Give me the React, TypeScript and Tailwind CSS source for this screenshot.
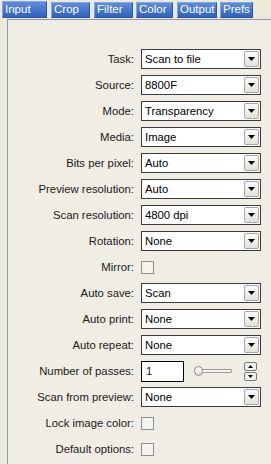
import React from 'react';

type Row =
  | { kind: 'select'; label: string; value: string }
  | { kind: 'check'; label: string }
  | { kind: 'passes'; label: string; value: string };

// tab name, size, left gap
const tabs: [string, string, string][] = [
  ['Input', 'w-[45px] h-[17px]', 'ml-[2px]'],
  ['Crop', 'w-[39px] h-[16px]', 'ml-[4px]'],
  ['Filter', 'w-[39px] h-[16px]', 'ml-[4px]'],
  ['Color', 'w-[37px] h-[16px]', 'ml-[3px]'],
  ['Output', 'w-[40px] h-[16px]', 'ml-[4px]'],
  ['Prefs', 'w-[33px] h-[16px]', 'ml-[3px]'],
];

const rows: Row[] = [
  { kind: 'select', label: 'Task:', value: 'Scan to file' },
  { kind: 'select', label: 'Source:', value: '8800F' },
  { kind: 'select', label: 'Mode:', value: 'Transparency' },
  { kind: 'select', label: 'Media:', value: 'Image' },
  { kind: 'select', label: 'Bits per pixel:', value: 'Auto' },
  { kind: 'select', label: 'Preview resolution:', value: 'Auto' },
  { kind: 'select', label: 'Scan resolution:', value: '4800 dpi' },
  { kind: 'select', label: 'Rotation:', value: 'None' },
  { kind: 'check', label: 'Mirror:' },
  { kind: 'select', label: 'Auto save:', value: 'Scan' },
  { kind: 'select', label: 'Auto print:', value: 'None' },
  { kind: 'select', label: 'Auto repeat:', value: 'None' },
  { kind: 'passes', label: 'Number of passes:', value: '1' },
  { kind: 'select', label: 'Scan from preview:', value: 'None' },
  { kind: 'check', label: 'Lock image color:' },
  { kind: 'check', label: 'Default options:' },
];

const Arrow = () => (
  <div className="w-[15px] h-[16px] mr-[1px] rounded-[2px] border border-[#a7a6aa] bg-gradient-to-b from-[#fbfbf9] to-[#e3e1d8] flex items-center justify-center">
    <svg width="7" height="4" viewBox="0 0 7 4">
      <path d="M0 0 H7 L3.5 4 Z" fill="#000" />
    </svg>
  </div>
);

const Select = ({ value }: { value: string }) => (
  <div className="w-[120px] h-[20px] border border-[#3c3c3c] bg-white flex items-center justify-between">
    <span className="pl-[3px] text-black">{value}</span>
    <Arrow />
  </div>
);

const Check = () => <div className="w-[13px] h-[13px] border border-[#8e8f8f] bg-[#f4f3ee]" />;

const Passes = ({ value }: { value: string }) => (
  <div className="flex items-center">
    <div className="w-[43px] h-[21px] border border-black bg-white flex items-center pl-[4px]">{value}</div>
    <div className="relative w-[42px] h-[21px] ml-[9px]">
      <div className="absolute left-[4px] right-[3px] top-[8px] h-[4px] border border-[#9d9d9d] bg-[#f4f3ee] rounded-[1px]" />
      <div className="absolute left-[1px] top-[5px] w-[9px] h-[10px] rounded-full border border-[#8a8a8a] bg-gradient-to-b from-white to-[#dcdad0]" />
    </div>
    <div className="ml-[9px] flex flex-col gap-[1px]">
      <div className="w-[13px] h-[9px] rounded-[2px] border border-[#7a7a7a] bg-[#f1f0ea] flex items-center justify-center">
        <svg width="5" height="3" viewBox="0 0 5 3"><path d="M0 3 H5 L2.5 0 Z" fill="#000" /></svg>
      </div>
      <div className="w-[13px] h-[9px] rounded-[2px] border border-[#7a7a7a] bg-[#f1f0ea] flex items-center justify-center">
        <svg width="5" height="3" viewBox="0 0 5 3"><path d="M0 0 H5 L2.5 3 Z" fill="#000" /></svg>
      </div>
    </div>
  </div>
);

export default function App() {
  return (
    <div className="w-[271px] h-[464px] bg-[#ece9d8] text-[11.3px] text-[#1a1a1a] overflow-hidden" style={{ fontFamily: '"Liberation Sans", Arial, sans-serif' }}>
      <div className="flex items-end h-[18px]">
        {tabs.map(([t, size, gap]) => (
          <div
            key={t}
            className={`${size} ${gap} pl-[2px] flex items-center overflow-hidden whitespace-nowrap text-[11.5px] text-white bg-gradient-to-b from-[#5d8ddb] to-[#2f62bd] border border-[#2a58a8] border-t-[#7fa6e6] border-l-[#7fa6e6] leading-none`}
          >
            {t}
          </div>
        ))}
      </div>
      <div className="ml-[7px] mt-[1px] h-[460px] border-l border-t border-[#8a99b7] bg-[#efede4] pt-[29px] flex flex-col gap-[6px]">
        {rows.map(r => (
          <div key={r.label} className="flex items-center h-[20px]">
            <div className="w-[133px] text-right pr-[7px] whitespace-nowrap">{r.label}</div>
            {r.kind === 'select' && <Select value={r.value} />}
            {r.kind === 'check' && <Check />}
            {r.kind === 'passes' && <Passes value={r.value} />}
          </div>
        ))}
      </div>
    </div>
  );
}
